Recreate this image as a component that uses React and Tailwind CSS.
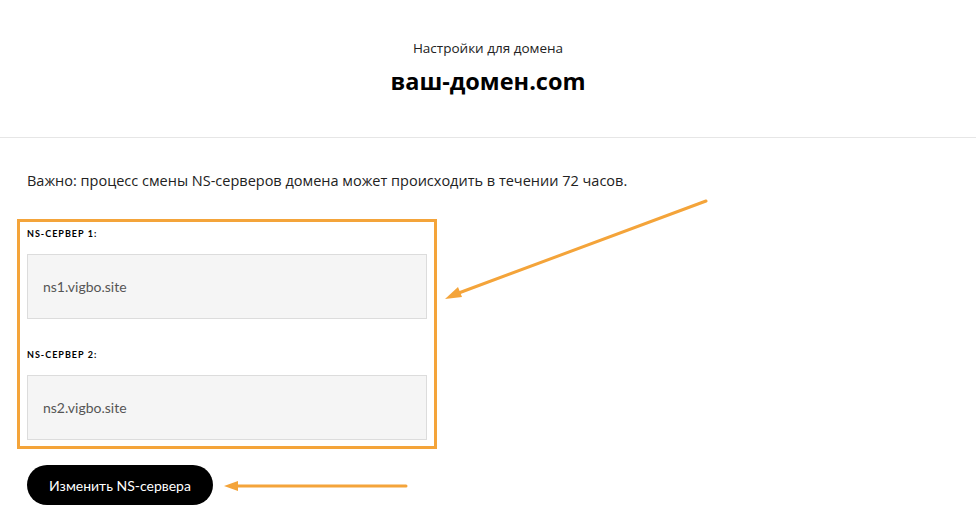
export default function App() {
  const font = { fontFamily: 'Lato, "Open Sans", sans-serif' }
  const wide = { fontFamily: '"Open Sans", Lato, sans-serif' }
  return (
    <div className="relative w-[976px] h-[525px] bg-white overflow-hidden text-[#1a1a1a]" style={font}>
      <header className="h-[138px] border-b border-[#e6e6e6] flex flex-col items-center pt-[40px]">
        <div className="text-[13.5px] leading-[16px] text-[#222]" style={wide}>Настройки для домена</div>
        <h1 className="mt-[11px] text-[23.5px] leading-[28px] font-bold text-black" style={wide}>ваш-домен.com</h1>
      </header>

      <div className="px-[27px] pt-[34px]">
        <p className="text-[14.5px] leading-[18px] text-[#222]" style={wide}>
          Важно: процесс смены NS-серверов домена может происходить в течении 72 часов.
        </p>

        <div className="mt-[29px] -ml-[10px] w-[420px] border-[3px] border-[#f4a43a] px-[7px] pt-[6px] pb-[6px]">
          <label className="block text-[9px] leading-[12px] font-bold tracking-[1px] text-black">NS-СЕРВЕР 1:</label>
          <div className="mt-[14px] h-[65px] border border-[#dcdcdc] bg-[#f5f5f5] flex items-center px-[15px] text-[14px] text-[#555]">
            ns1.vigbo.site
          </div>
          <label className="block mt-[30px] text-[9px] leading-[12px] font-bold tracking-[1px] text-black">NS-СЕРВЕР 2:</label>
          <div className="mt-[14px] h-[65px] border border-[#dcdcdc] bg-[#f5f5f5] flex items-center px-[15px] text-[14px] text-[#555]">
            ns2.vigbo.site
          </div>
        </div>

        <button className="mt-[16px] h-[40px] w-[186px] rounded-full bg-black text-white text-[14px] flex items-center justify-center">
          Изменить NS-сервера
        </button>
      </div>

      <svg className="absolute left-0 top-0 pointer-events-none" width="976" height="525">
        <line x1="706" y1="201" x2="456" y2="294" stroke="#f4a43a" strokeWidth="3" strokeLinecap="round" />
        <polygon points="445,299 458,287 462,297" fill="#f4a43a" />
        <line x1="406" y1="486" x2="236" y2="486" stroke="#f4a43a" strokeWidth="3" strokeLinecap="round" />
        <polygon points="224,486 238,481 238,491" fill="#f4a43a" />
      </svg>
    </div>
  )
}
